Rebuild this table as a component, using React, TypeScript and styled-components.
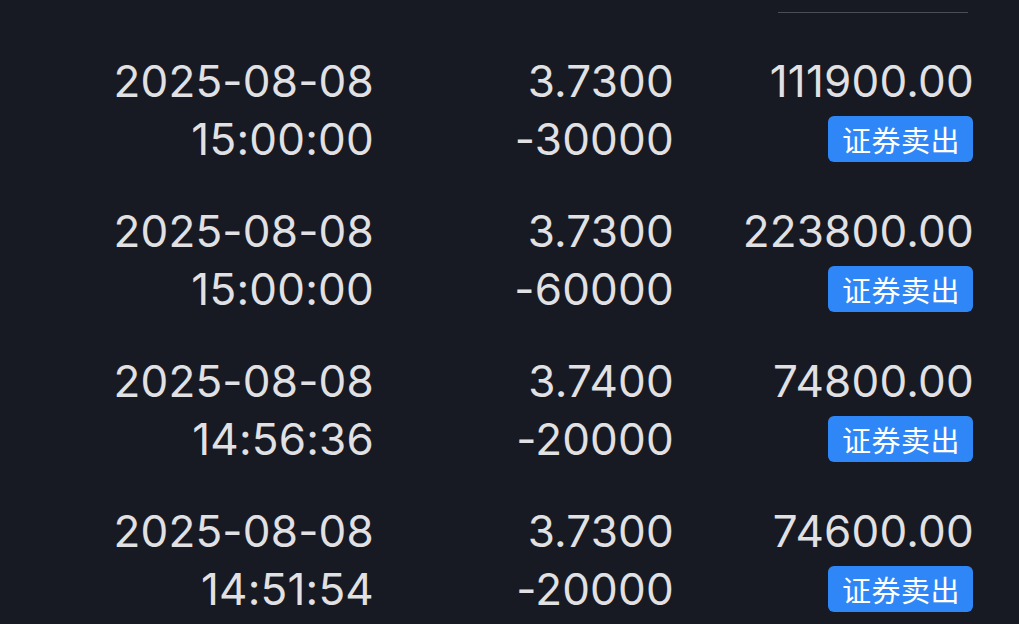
import React from 'react'
import styled, { createGlobalStyle } from 'styled-components'

const GlobalStyle = createGlobalStyle`
  html, body {
    margin: 0;
    padding: 0;
    background: #171923;
  }
  body {
    font-family: Inter, "Noto Sans CJK SC", sans-serif;
    -webkit-font-smoothing: antialiased;
  }
`

const Page = styled.div`
  width: 1019px;
  height: 624px;
  overflow: hidden;
  background: #171923;
  color: #e1e1e4;
`

const TopBar = styled.div`
  height: 35px;
  padding-top: 12px;
  box-sizing: border-box;
`

const Divider = styled.div`
  margin-left: 778px;
  width: 190px;
  height: 1px;
  background: #4b4d57;
`

const Row = styled.div`
  display: grid;
  grid-template-columns: repeat(3, 300px);
  grid-template-rows: 58px 58px;
  padding: 17px 0 17px 74px;
`

const Cell = styled.div`
  display: flex;
  align-items: center;
  justify-content: flex-end;
  font-size: 44px;
  line-height: 58px;
  letter-spacing: 0.2px;
  white-space: nowrap;
`

const Tag = styled.span`
  display: inline-flex;
  align-items: center;
  height: 46px;
  padding: 0 13px 0 14px;
  margin-right: 1px;
  border-radius: 6px;
  background: #2f87f7;
  color: #ffffff;
  font-family: "Noto Sans CJK SC", sans-serif;
  font-size: 29px;
  letter-spacing: 0.5px;
  line-height: 46px;
`

type Trade = {
  date: string
  time: string
  price: string
  qty: string
  amount: string
  kind: string
}

const trades: Trade[] = [
  { date: '2025-08-08', time: '15:00:00', price: '3.7300', qty: '-30000', amount: '111900.00', kind: '证券卖出' },
  { date: '2025-08-08', time: '15:00:00', price: '3.7300', qty: '-60000', amount: '223800.00', kind: '证券卖出' },
  { date: '2025-08-08', time: '14:56:36', price: '3.7400', qty: '-20000', amount: '74800.00', kind: '证券卖出' },
  { date: '2025-08-08', time: '14:51:54', price: '3.7300', qty: '-20000', amount: '74600.00', kind: '证券卖出' },
]

const App = () => {
  return (
    <Page>
      <GlobalStyle />
      <TopBar>
        <Divider />
      </TopBar>
      {trades.map((t, i) => (
        <Row key={i}>
          <Cell>{t.date}</Cell>
          <Cell>{t.price}</Cell>
          <Cell>{t.amount}</Cell>
          <Cell>{t.time}</Cell>
          <Cell>{t.qty}</Cell>
          <Cell>
            <Tag>{t.kind}</Tag>
          </Cell>
        </Row>
      ))}
    </Page>
  )
}

export default App
